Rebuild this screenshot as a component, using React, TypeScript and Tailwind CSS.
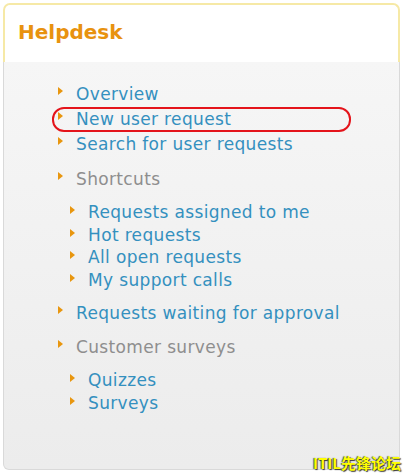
import React from 'react';

const font = { fontFamily: '"DejaVu Sans", Verdana, sans-serif' };

function Bullet() {
  return (
    <svg width="5" height="8" viewBox="0 0 5 8" className="shrink-0 mt-[5px]">
      <polygon points="0,0 5,4 0,8" fill="#e8960f" />
    </svg>
  );
}

function Item({ label, muted, sub }: { label: string; muted?: boolean; sub?: boolean }) {
  return (
    <div className={`flex items-start ${sub ? 'leading-[22.5px] pl-[12px]' : 'leading-[25px]'}`}>
      <Bullet />
      <span className={`ml-[13px] tracking-[0.35px] ${muted ? 'text-[#8e8e8e]' : 'text-[#3490bf]'}`}>{label}</span>
    </div>
  );
}

export default function App() {
  return (
    <div className="relative w-[403px] h-[474px] bg-white overflow-hidden" style={font}>
      <div className="absolute left-[3px] top-[3px] w-[397px] h-[467px] flex flex-col">
        {/* Header */}
        <div className="h-[59px] bg-white border-[2px] border-b-0 border-[#f6e9a6] rounded-t-[7px] pl-[13px] pt-[14px]">
          <h1 className="text-[20px] font-bold text-[#e8920f] leading-[26px]">Helpdesk</h1>
        </div>

        {/* Body */}
        <div className="flex-1 bg-gradient-to-b from-[#f6f6f6] to-[#ececec] border border-t-0 border-[#d9d9d9] rounded-b-[6px] pl-[54px] pt-[20px] text-[17px]">
          <Item label="Overview" />
          <Item label="New user request" />
          <Item label="Search for user requests" />

          <div className="mt-[10px]">
            <Item label="Shortcuts" muted />
          </div>
          <div className="mt-[9px]">
            <Item label="Requests assigned to me" sub />
            <Item label="Hot requests" sub />
            <Item label="All open requests" sub />
            <Item label="My support calls" sub />
          </div>

          <div className="mt-[10px]">
            <Item label="Requests waiting for approval" />
          </div>
          <div className="mt-[9px]">
            <Item label="Customer surveys" muted />
          </div>
          <div className="mt-[9px]">
            <Item label="Quizzes" sub />
            <Item label="Surveys" sub />
          </div>
        </div>
      </div>

      {/* Red annotation */}
      <div className="absolute left-[52px] top-[107px] w-[299px] h-[25px] border-2 border-[#e4141b] rounded-[12px]" />

      {/* Watermark */}
      <div
        className="absolute right-[2px] top-[454px] text-[15px] leading-[18px] text-[#ffff00] font-bold"
        style={{ fontFamily: '"Noto Sans CJK SC", sans-serif', textShadow: '1px 1px 1px #333, -1px 0 1px #555' }}
      >
        ITIL先锋论坛
      </div>
    </div>
  );
}
